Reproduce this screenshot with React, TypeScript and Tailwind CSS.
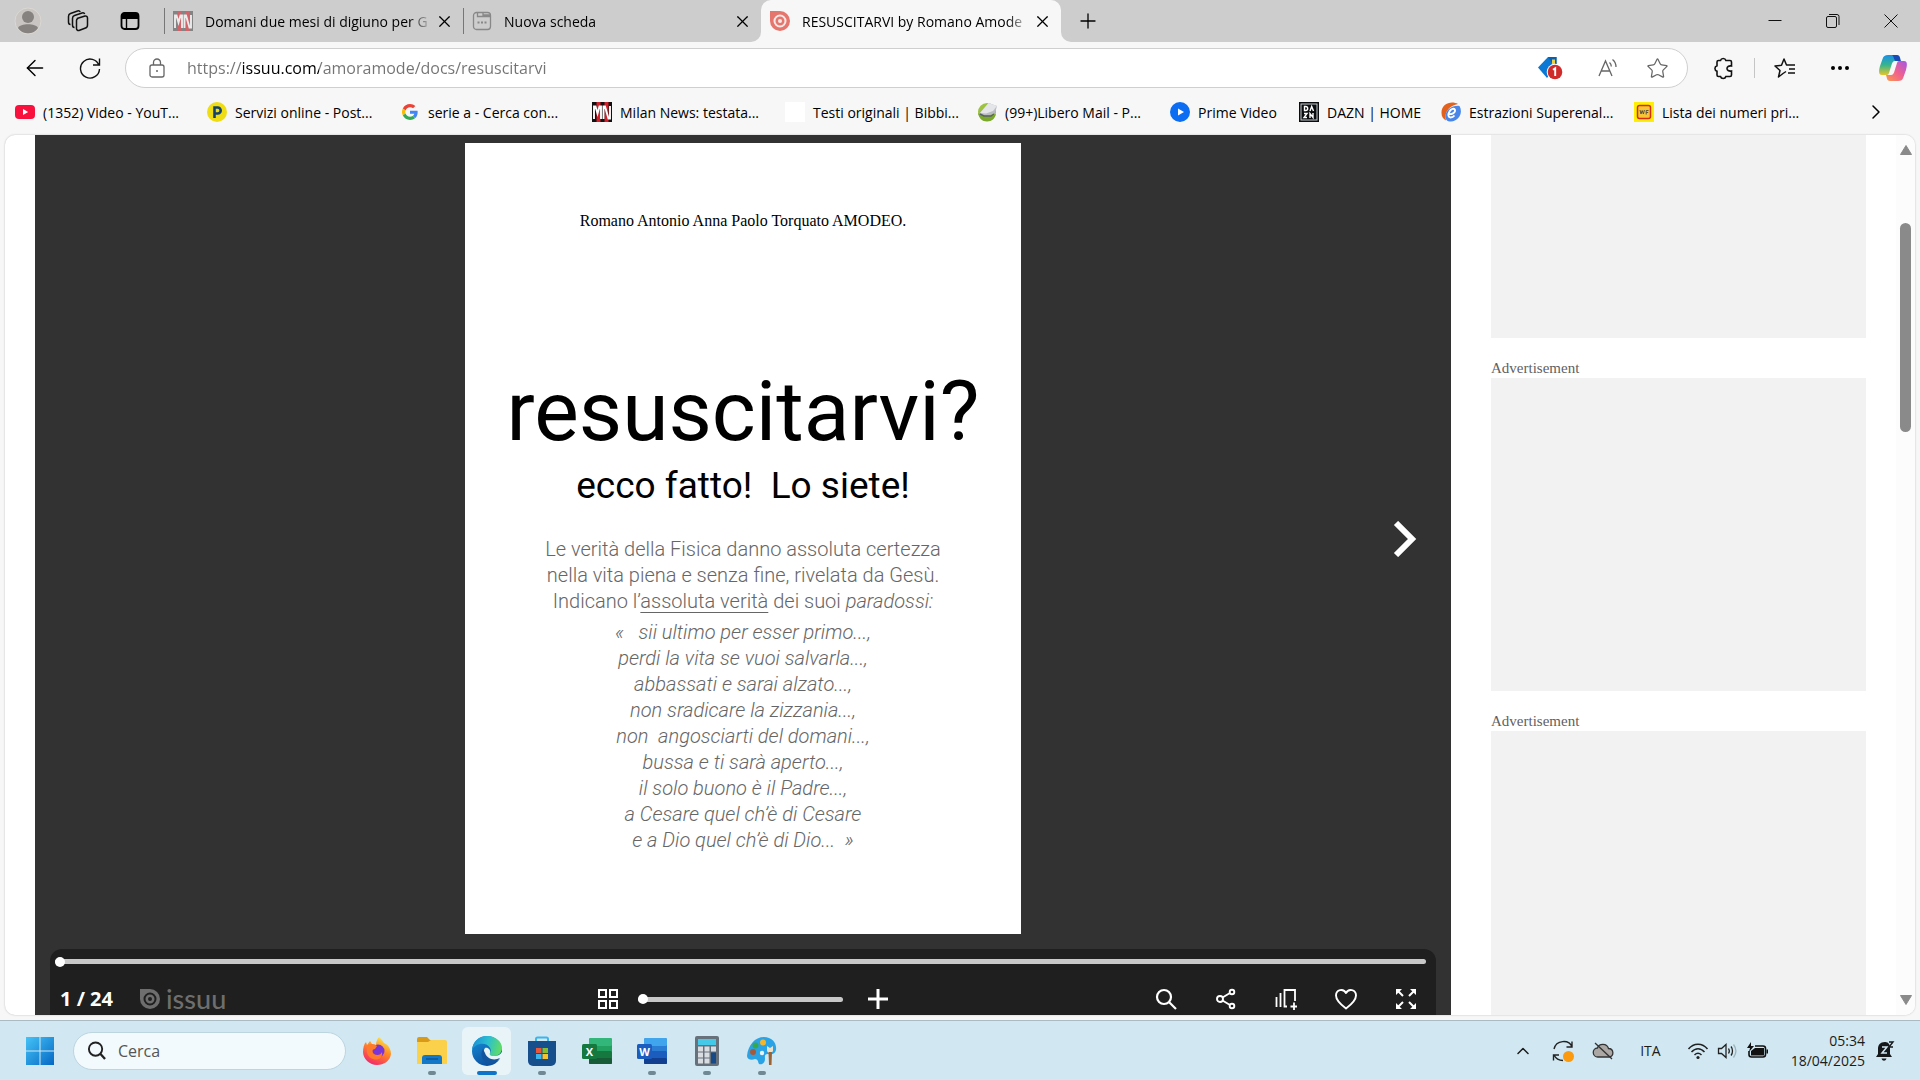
/**
 * App.tsx
 *
 * Windows desktop with a browser window open on a document reader page:
 * tab strip, toolbar, favourites bar, reader + ad column, taskbar.
 */

import { useState, type ReactNode } from "react";
import { ArrowLeft, ChevronRight, ChevronUp, Ellipsis, Plus, Star, X } from "lucide-react";

const UI_FONT = "font-['Open_Sans','Noto_Sans',sans-serif]";

/* ---------- Small logos ---------- */

function MilanNewsLogo({ faded = false }: { faded?: boolean }) {
    return (
        <svg viewBox="0 0 20 20" className={`size-5 shrink-0 ${faded ? "opacity-60" : ""}`} aria-hidden="true">
            <rect width="20" height="20" fill={faded ? "#555" : "#111"} />
            <rect x="4.500" width="4" height="20" fill="#d3202b" />
            <rect x="12.500" width="4" height="20" fill="#d3202b" />
            <path d="M2 17V4.500h1.500l2 7 2-7H9V17M11.500 17V4.500H13l3.500 12H18V4" fill="none" stroke="#fff" strokeWidth="1.900" />
        </svg>
    );
}

function IssuuMark({ className, color, hole }: { className: string; color: string; hole: string }) {
    return (
        <svg viewBox="0 0 20 20" className={className} aria-hidden="true">
            <path d="M0 0h10a10 10 0 1 1-10 10z" fill={color} />
            <circle cx="10" cy="10" r="5.500" fill="none" stroke={hole} strokeWidth="2" />
            <circle cx="10" cy="10" r="2" fill={hole} />
        </svg>
    );
}

function YouTubeLogo() {
    return (
        <svg viewBox="0 0 20 20" className="size-5 shrink-0" aria-hidden="true">
            <rect y="3" width="20" height="14" rx="4" fill="#f8113c" />
            <path d="M8 7l5.200 3L8 13z" fill="#fff" />
        </svg>
    );
}

function PosteLogo() {
    return (
        <svg viewBox="0 0 20 20" className="size-5 shrink-0" aria-hidden="true">
            <circle cx="10" cy="10" r="10" fill="#eedc14" />
            <path d="M7.500 16V5.500h3.200a3 3 0 0 1 0 6H7.500" fill="none" stroke="#12416f" strokeWidth="2.600" />
        </svg>
    );
}

function GoogleLogo() {
    return (
        <svg viewBox="0 0 48 48" className="size-5 shrink-0 p-[2px]" aria-hidden="true">
            <path fill="#EA4335" d="M24 9.500c3.540 0 6.710 1.220 9.210 3.600l6.850-6.850C35.900 2.380 30.470 0 24 0 14.620 0 6.510 5.380 2.560 13.220l7.980 6.190C12.430 13.720 17.740 9.500 24 9.500z" />
            <path fill="#4285F4" d="M46.980 24.550c0-1.570-.15-3.090-.38-4.550H24v9.020h12.940c-.58 2.960-2.260 5.480-4.780 7.180l7.730 6c4.510-4.180 7.090-10.360 7.090-17.650z" />
            <path fill="#FBBC05" d="M10.530 28.590a14.500 14.500 0 0 1 0-9.180l-7.980-6.190a24 24 0 0 0 0 21.560l7.980-6.190z" />
            <path fill="#34A853" d="M24 48c6.480 0 11.930-2.130 15.890-5.810l-7.730-6c-2.150 1.450-4.920 2.300-8.160 2.300-6.260 0-11.570-4.220-13.470-9.910l-7.980 6.190C6.510 42.620 14.620 48 24 48z" />
        </svg>
    );
}

function LiberoLogo() {
    return (
        <svg viewBox="0 0 20 20" className="size-5 shrink-0" aria-hidden="true">
            <circle cx="10" cy="10" r="9" fill="#9cc23f" />
            <path d="M1 11c1 5 4 8.500 9 8.500s8-3 9-7.500c-5 3-12 3-18-1z" fill="#7aa82b" />
            <path d="M3 11l8.500-10L20 4l-2 7-5 2H4z" fill="#b9bdc1" />
            <path d="M3 11l8.500-10L20 4l-4 5-7 2.500z" fill="#e3e5e8" />
            <path d="M3 12l4 2h7l3-2" fill="none" stroke="#59606a" strokeWidth="1.500" />
        </svg>
    );
}

function PrimeLogo() {
    return (
        <svg viewBox="0 0 20 20" className="size-5 shrink-0" aria-hidden="true">
            <circle cx="10" cy="10" r="10" fill="#0c6cf2" />
            <path d="M8 6.500l6 3.500-6 3.500z" fill="#fff" />
        </svg>
    );
}

function DaznLogo() {
    return (
        <svg viewBox="0 0 20 20" className="size-5 shrink-0" aria-hidden="true">
            <rect width="20" height="20" fill="#0b0c0e" />
            <rect x="2" y="2" width="16" height="16" fill="none" stroke="#c9cdd0" />
            <path d="M5.500 4.500v4h1.200a2 2 0 0 0 0-4zM11 9l1.700-4.500L14.500 9M5 11.500h3l-3 4h3M11 16v-4.500l3 4V11" fill="none" stroke="#fff" strokeWidth="1.400" />
        </svg>
    );
}

function EstrazioniLogo() {
    return (
        <svg viewBox="0 0 20 20" className="size-5 shrink-0" aria-hidden="true">
            <path d="M17 2C10-2 0 2 .5 11c0 4 2 6 4.500 7.500C3 10 8 4 17 2z" fill="#e2621d" />
            <path d="M18.500 4c4 7-1 15-8.500 15.500-3 .5-5-1-5.500-4C4 8 11 3 18.500 4z" fill="#4a86e8" />
            <path d="M7.500 12c3 .5 7-1 6.500-4-.5-2-4-1.500-5.500 1.500-2 3.500-1 6 1 6s3-.8 4-2" fill="none" stroke="#fff" strokeWidth="1.900" />
        </svg>
    );
}

function WfLogo() {
    return (
        <svg viewBox="0 0 20 20" className="size-5 shrink-0" aria-hidden="true">
            <rect width="20" height="20" fill="#ffee05" />
            <rect x="3.500" y="3.500" width="13" height="13" rx="2" fill="#f6c531" stroke="#d92b1c" strokeWidth="1.500" />
            <path d="M6 8l1 4 1.200-3.500L9.400 12l1-4M12.200 12.500V8.500h2.300M12.200 10.500h2" fill="none" stroke="#5b5348" strokeWidth="1" />
        </svg>
    );
}

function BlankLogo() {
    return <span className="size-5 shrink-0 bg-white" aria-hidden="true" />;
}

/* ---------- Tab strip ---------- */

function CloseTab({ name }: { name: string }) {
    return (
        <button type="button" aria-label={`Chiudi ${name}`} className="grid size-6 shrink-0 place-items-center text-black">
            <X size={19} strokeWidth={1.500} />
        </button>
    );
}

// Long titles fade out towards the close button.
function TabTitle({ children }: { children: string }) {
    return (
        <span className="ml-3 min-w-0 flex-1 whitespace-nowrap text-[14px] mask-r-from-90% mask-r-to-100%">
            {children}
        </span>
    );
}

function TabStrip() {
    return (
        <div className="flex h-[42px] bg-[#f7f7f7]">
            <div className="flex w-[761px] shrink-0 items-center rounded-br-[10px] bg-[#cdcdcd]">
                <button type="button" aria-label="Profilo" className="ml-[14px]">
                    <svg viewBox="0 0 28 28" className="size-7">
                        <circle cx="14" cy="14" r="13" fill="#c8c5c2" stroke="#dcd8d3" />
                        <circle cx="14" cy="10" r="6" fill="#85827f" />
                        <path d="M4 21c2-5 18-5 20 0-4 7-16 7-20 0z" fill="#85827f" />
                    </svg>
                </button>
                <button type="button" aria-label="Aree di lavoro" className="ml-6">
                    <svg viewBox="0 0 24 24" className="size-6" fill="none" stroke="#111" strokeWidth="1.500">
                        <path d="M11 9.500l8-2.500a2 2 0 0 1 2.500 2v7a3 3 0 0 1-2 3L13 21.500a2 2 0 0 1-2.500-2v-8a2 2 0 0 1 1.500-2z" />
                        <path d="M8.500 18.500C7 18.500 6.500 17.500 6.500 16V9.500c0-1.500.5-2.500 2-3L16 4c1.500-.4 2.300 0 2.700 1" />
                        <path d="M4.500 15.500C3 15.500 2.500 14.500 2.500 13V7.500c0-1.500.5-2.500 2-3L11.500 2c1.500-.4 2.300 0 2.700 1" />
                    </svg>
                </button>
                <button type="button" aria-label="Menu azioni schede" className="ml-[30px]">
                    <svg viewBox="0 0 20 20" className="size-5" fill="none" stroke="#000" strokeWidth="1.800">
                        <rect x="1.500" y="2" width="17" height="16" rx="3" />
                        <path d="M2 4h16v3H2z" fill="#000" />
                        <path d="M6.500 7v11" strokeWidth="1.400" />
                    </svg>
                </button>
                <div className="ml-6 h-[26px] w-px bg-[#777]" />

                <div className="flex w-[298px] items-center pr-[7px] pl-2">
                    <MilanNewsLogo faded />
                    <TabTitle>Domani due mesi di digiuno per G</TabTitle>
                    <CloseTab name="Domani due mesi di digiuno" />
                </div>
                <div className="h-[26px] w-px bg-[#777]" />
                <div className="flex flex-1 items-center pr-[7px] pl-2">
                    <svg viewBox="0 0 20 20" className="size-5 shrink-0" fill="none" stroke="#888" strokeWidth="1.300">
                        <rect x="1.500" y="1.500" width="17" height="17" rx="3" />
                        <path d="M5.500 1.500v4h13M11 1.500v2.500h7" />
                        <path d="M5.500 11.500h2M9 11.500h2M12.500 11.500h2" strokeWidth="1.800" />
                    </svg>
                    <TabTitle>Nuova scheda</TabTitle>
                    <CloseTab name="Nuova scheda" />
                </div>
            </div>

            <div className="w-[300px] shrink-0 bg-linear-to-b from-[#cdcdcd] from-50% to-[#f7f7f7] to-50%">
                <div className="flex h-full items-center rounded-t-[10px] bg-[#f7f7f7] pr-[7px] pl-[9px]">
                    <IssuuMark className="size-5 shrink-0" color="#e5766d" hole="#f7e9e7" />
                    <TabTitle>RESUSCITARVI by Romano Amode</TabTitle>
                    <CloseTab name="RESUSCITARVI" />
                </div>
            </div>

            <div className="flex flex-1 items-center justify-between rounded-bl-[10px] bg-[#cdcdcd] pl-[15px]">
                <button type="button" aria-label="Nuova scheda">
                    <Plus size={24} strokeWidth={1.300} />
                </button>
                <div className="flex">
                    <button type="button" aria-label="Riduci a icona" className="grid w-[58px] place-items-center">
                        <svg viewBox="0 0 14 14" className="size-[14px]" stroke="#111"><path d="M0.500 6.500h13" /></svg>
                    </button>
                    <button type="button" aria-label="Ripristina" className="grid w-[58px] place-items-center">
                        <svg viewBox="0 0 14 14" className="size-[14px]" fill="none" stroke="#111">
                            <rect x="0.500" y="2.500" width="10" height="11" rx="1.500" />
                            <path d="M3 .5h8a2 2 0 0 1 2 2V11" />
                        </svg>
                    </button>
                    <button type="button" aria-label="Chiudi" className="grid w-[58px] place-items-center">
                        <svg viewBox="0 0 14 14" className="size-[14px]" stroke="#111"><path d="M.5.5l13 13M13.500.5l-13 13" /></svg>
                    </button>
                </div>
            </div>
        </div>
    );
}

/* ---------- Toolbar ---------- */

function Toolbar() {
    const [url, setUrl] = useState("https://issuu.com/amoramode/docs/resuscitarvi");

    return (
        <div className="flex h-[52px] items-center bg-[#f7f7f7]">
            <button type="button" aria-label="Indietro" className="ml-[22px]">
                <ArrowLeft size={26} strokeWidth={1.300} />
            </button>
            <button type="button" aria-label="Aggiorna" className="ml-[30px]">
                <svg viewBox="0 0 24 24" className="size-6" fill="none" stroke="#111" strokeWidth="1.400">
                    <path d="M21 9.500A9.500 9.500 0 1 0 21.500 13M21.500 2.500v6.500h-6.500" />
                </svg>
            </button>

            <div className="ml-[23px] flex h-10 min-w-0 flex-1 items-center rounded-full border border-[#cfcfcf] bg-white pr-[18px] pl-[22px]">
                <svg viewBox="0 0 18 20" className="h-5 w-[18px] shrink-0" fill="none" stroke="#666" strokeWidth="1.300">
                    <rect x="2" y="7" width="14" height="12" rx="2" />
                    <path d="M5.500 7V4.500a3.500 3.500 0 0 1 7 0V7" />
                    <circle cx="9" cy="13" r="1" fill="#666" stroke="none" />
                </svg>
                <input
                    type="text"
                    aria-label="Barra degli indirizzi"
                    value={url}
                    onChange={(e) => setUrl(e.target.value)}
                    className="ml-[21px] min-w-0 flex-1 bg-[linear-gradient(90deg,#737373_56px,#000_56px,#000_132px,#737373_132px)] bg-clip-text text-[16px] text-transparent caret-black outline-none"
                />
                <button type="button" aria-label="Offerte">
                    <svg viewBox="0 0 26 26" className="size-[26px]">
                        <path d="M1 12.500L11 2h8.500v9L10 23z" fill="#0a78d4" />
                        <path d="M11 2h8.500v10l-3-2z" fill="#0d5fa8" />
                        <path d="M15 4.500h3V9h-3z" fill="#e8d24a" />
                        <circle cx="18" cy="17" r="8.300" fill="#fff" />
                        <circle cx="18" cy="17" r="7.300" fill="#cf2b2b" />
                        <path d="M16 14.800l2.200-1.500V21" fill="none" stroke="#fff" strokeWidth="1.900" />
                    </svg>
                </button>
                <button type="button" aria-label="Leggi ad alta voce" className="ml-[34px]">
                    <svg viewBox="0 0 22 22" className="size-[22px]" fill="none" stroke="#666" strokeWidth="1.300">
                        <path d="M2 19L8.500 4 15 19M4.200 14h8.600" />
                        <path d="M12.500 5.500c1.200 1 1.800 2.300 1.800 4M15.500 2.500c2.500 2 3.500 4.500 3.500 7.500" />
                    </svg>
                </button>
                <button type="button" aria-label="Aggiungi ai preferiti" className="ml-[27px] text-[#666]">
                    <Star size={23} strokeWidth={1.300} />
                </button>
            </div>

            <button type="button" aria-label="Estensioni" className="ml-6">
                <svg viewBox="0 0 24 24" className="size-6" fill="none" stroke="#111" strokeWidth="1.600">
                    <path d="M8.500 4.500a2.800 2.800 0 0 1 5.400 0H18a1.500 1.500 0 0 1 1.500 1.500v4c-3-.5-4.500 1-4.500 2.500s1.500 3 4.500 2.500v4a1.500 1.500 0 0 1-1.500 1.500h-4.100a2.800 2.800 0 0 1-5.400 0H6.500A1.500 1.500 0 0 1 5 19v-3.800a2.800 2.800 0 0 1 0-5.400V6a1.500 1.500 0 0 1 1.500-1.500z" />
                </svg>
            </button>
            <div className="ml-[18px] h-5 w-px bg-[#c5c5c5]" />
            <button type="button" aria-label="Preferiti" className="ml-[18px]">
                <svg viewBox="0 0 24 24" className="size-6" fill="none" stroke="#111" strokeWidth="1.500">
                    <path d="M13 15.500l-3 2L5.500 21l1.500-6.500L2 10l6.500-.8L11 3l2.500 6H22M16 13h6M15 17h7" strokeLinejoin="round" />
                </svg>
            </button>
            <button type="button" aria-label="Impostazioni e altro" className="ml-[31px]">
                <Ellipsis size={24} strokeWidth={2} />
            </button>
            <button type="button" aria-label="Copilot" className="mr-3 ml-[26px]">
                <svg viewBox="0 0 30 30" className="size-[30px]">
                    <defs>
                        <linearGradient id="cpA" x1="0" y1="0" x2="0" y2="1">
                            <stop offset="0" stopColor="#1a8fe8" />
                            <stop offset="0.5" stopColor="#35b58d" />
                            <stop offset="1" stopColor="#e6c52b" />
                        </linearGradient>
                        <linearGradient id="cpB" x1="1" y1="0" x2="0" y2="1">
                            <stop offset="0" stopColor="#a259e6" />
                            <stop offset="0.5" stopColor="#f0608f" />
                            <stop offset="1" stopColor="#fb9b4b" />
                        </linearGradient>
                    </defs>
                    <path d="M10 2h8c3 0 3 3 4 6h-5c-2 0-3 2-3.500 4L11 20c-.7 2-1.500 2-3 2H4c-4 0-3-5-2-9L4.500 6C5.500 3 7 2 10 2z" fill="url(#cpA)" />
                    <path d="M16 2h3c3 0 3 3 4 6h-5c-2 0-2-5-4-6z" fill="#1a49b8" />
                    <path d="M20 28h-8c-3 0-3-3-4-6h5c2 0 3-2 3.500-4L19 10c.7-2 1.500-2 3-2h4c4 0 3 5 2 9l-2.500 7c-1 3-2.500 4-5.500 4z" fill="url(#cpB)" />
                </svg>
            </button>
        </div>
    );
}

/* ---------- Favourites bar ---------- */

const FAVOURITES: { label: string; icon: ReactNode; width: string }[] = [
    { label: "(1352) Video - YouT...", icon: <YouTubeLogo />, width: "w-48" },
    { label: "Servizi online - Post...", icon: <PosteLogo />, width: "w-[193px]" },
    { label: "serie a - Cerca con...", icon: <GoogleLogo />, width: "w-48" },
    { label: "Milan News: testata...", icon: <MilanNewsLogo />, width: "w-[193px]" },
    { label: "Testi originali | Bibbi...", icon: <BlankLogo />, width: "w-48" },
    { label: "(99+)Libero Mail - P...", icon: <LiberoLogo />, width: "w-[193px]" },
    { label: "Prime Video", icon: <PrimeLogo />, width: "w-[129px]" },
    { label: "DAZN | HOME", icon: <DaznLogo />, width: "w-[142px]" },
    { label: "Estrazioni Superenal...", icon: <EstrazioniLogo />, width: "w-[193px]" },
    { label: "Lista dei numeri pri...", icon: <WfLogo />, width: "w-48" },
];

function FavouritesBar() {
    return (
        <nav aria-label="Preferiti" className="flex h-[41px] items-center bg-[#f7f7f7] pb-[5px] pl-[15px] text-[14px] text-black">
            {FAVOURITES.map((f) => (
                <a key={f.label} href="#" className={`flex shrink-0 items-center gap-2 whitespace-nowrap ${f.width}`}>
                    {f.icon}
                    {f.label}
                </a>
            ))}
            <button type="button" aria-label="Altri preferiti" className="mr-8 ml-auto">
                <ChevronRight size={24} strokeWidth={1.500} />
            </button>
        </nav>
    );
}

/* ---------- Reader ---------- */

const VERSES = [
    "«\u00a0\u00a0 sii ultimo per esser primo...,",
    "perdi la vita se vuoi salvarla...,",
    "abbassati e sarai alzato...,",
    "non sradicare la zizzania...,",
    "non\u00a0 angosciarti del domani...,",
    "bussa e ti sarà aperto...,",
    "il solo buono è il Padre...,",
    "a Cesare quel ch’è di Cesare",
    "e a Dio quel ch’è di Dio...\u00a0 »",
];

function DocumentPage() {
    return (
        <article className="h-[791px] w-[556px] shrink-0 bg-white text-center font-['Roboto','Liberation_Sans',sans-serif] text-black">
            <p className="pt-[68px] font-['Liberation_Serif','Times_New_Roman',serif] text-[16px] leading-5">
                Romano Antonio Anna Paolo Torquato AMODEO.
            </p>
            <h1 className="mt-[131px] text-[84px] leading-[100px]">resuscitarvi?</h1>
            <h2 className="mt-[2px] text-[37px] leading-[44px] whitespace-pre">ecco fatto!  Lo siete!</h2>
            <div className="mt-7 text-[20px] leading-[26px] font-light text-[#666]">
                <p>Le verità della Fisica danno assoluta certezza</p>
                <p>nella vita piena e senza fine, rivelata da Gesù.</p>
                <p>
                    Indicano l’<u className="decoration-1 underline-offset-4">assoluta verità</u> dei suoi <i>paradossi:</i>
                </p>
                <div className="mt-[5px] italic">
                    {VERSES.map((v) => (
                        <p key={v}>{v}</p>
                    ))}
                </div>
            </div>
        </article>
    );
}

const SLIDER =
    "h-[5px] appearance-none rounded-full bg-[#c8c8c8] outline-none [&::-webkit-slider-thumb]:size-[10px] [&::-webkit-slider-thumb]:appearance-none [&::-webkit-slider-thumb]:rounded-full [&::-webkit-slider-thumb]:bg-white";

function ReaderControls() {
    const [page, setPage] = useState(1);
    const [zoom, setZoom] = useState(0);

    return (
        <div className="mx-[15px] mt-[15px] h-[90px] shrink-0 rounded-t-xl bg-[#1f1f1f] pt-[10px] pr-[10px] pl-[5px] text-white">
            <input
                type="range"
                aria-label="Pagina"
                min={1}
                max={24}
                value={page}
                onChange={(e) => setPage(Number(e.target.value))}
                className={`block w-full ${SLIDER}`}
            />
            <div className="grid h-[70px] grid-cols-[1fr_auto_1fr] items-center pl-[5px]">
                <div className="flex items-center">
                    <span className="w-20 font-['Open_Sans',sans-serif] text-[20px] font-bold">{page} / 24</span>
                    <a href="#" aria-label="issuu" className="flex items-center gap-[6px] text-[#6e6e6e]">
                        <IssuuMark className="size-5" color="#6e6e6e" hole="#1f1f1f" />
                        <span className="font-['Lato',sans-serif] text-[27px] leading-7 font-medium">issuu</span>
                    </a>
                </div>
                <div className="flex items-center gap-5">
                    <button type="button" aria-label="Tutte le pagine">
                        <svg viewBox="0 0 20 20" className="size-5" fill="none" stroke="#fff" strokeWidth="2">
                            <path d="M1 1h7v7H1zM12 1h7v7h-7zM1 12h7v7H1zM12 12h7v7h-7z" />
                        </svg>
                    </button>
                    <input
                        type="range"
                        aria-label="Zoom"
                        value={zoom}
                        onChange={(e) => setZoom(Number(e.target.value))}
                        className={`w-[205px] ${SLIDER}`}
                    />
                    <button type="button" aria-label="Ingrandisci" className="ml-[5px]">
                        <svg viewBox="0 0 20 20" className="size-5" stroke="#fff" strokeWidth="3"><path d="M0 10h20M10 0v20" /></svg>
                    </button>
                </div>
                <div className="flex items-center justify-end gap-[38px] pr-[9px]">
                    <button type="button" aria-label="Cerca nel documento">
                        <svg viewBox="0 0 22 22" className="size-[22px]" fill="none" stroke="#fff" strokeWidth="2.200">
                            <circle cx="9" cy="9" r="7" />
                            <path d="M14 14l7 7" />
                        </svg>
                    </button>
                    <button type="button" aria-label="Condividi">
                        <svg viewBox="0 0 22 22" className="size-[22px]" fill="none" stroke="#fff" strokeWidth="1.900">
                            <circle cx="5" cy="11" r="3" />
                            <circle cx="17" cy="4" r="2.300" />
                            <circle cx="17" cy="18" r="2.300" />
                            <path d="M7.500 9.500L15 5M7.500 12.500L15 17" />
                        </svg>
                    </button>
                    <button type="button" aria-label="Aggiungi alla raccolta">
                        <svg viewBox="0 0 22 22" className="size-[22px]" fill="none" stroke="#fff" strokeWidth="1.800">
                            <path d="M1.500 9v10M5.500 5v14M12 18.500H9.500V2H20v11M19 14.500V22M15.500 18.500H22" />
                        </svg>
                    </button>
                    <button type="button" aria-label="Mi piace">
                        <svg viewBox="0 0 22 22" className="size-[22px]" fill="none" stroke="#fff" strokeWidth="1.900">
                            <path d="M11 20.500C7 17.500 1 12.500 1 7.500 1 1.500 8.500 0 11 5c2.500-5 10-3.500 10 2.500 0 5-6 10-10 13z" strokeLinejoin="round" />
                        </svg>
                    </button>
                    <button type="button" aria-label="Schermo intero">
                        <svg viewBox="0 0 22 22" className="size-[22px]" fill="#fff" stroke="#fff" strokeWidth="2">
                            <path d="M3 3l5 5M19 3l-5 5M3 19l5-5M19 19l-5-5" />
                            <path d="M1 1h6L1 7zM21 1h-6l6 6zM1 21h6l-6-6zM21 21h-6l6-6z" stroke="none" />
                        </svg>
                    </button>
                </div>
            </div>
        </div>
    );
}

function Reader() {
    return (
        <main className="flex min-w-0 flex-1 flex-col bg-[#323232] pt-2">
            <div className="relative flex shrink-0 justify-center">
                <DocumentPage />
                <button type="button" aria-label="Pagina successiva" className="absolute top-1/2 right-[34px] -translate-y-1/2">
                    <svg viewBox="0 0 24 36" className="h-9 w-6" fill="none" stroke="#fff" strokeWidth="6">
                        <path d="M3 2l16 16L3 34" />
                    </svg>
                </button>
            </div>
            <ReaderControls />
        </main>
    );
}

function AdColumn() {
    return (
        <aside className="mr-[30px] ml-10 w-[375px] shrink-0 font-['Liberation_Serif','Times_New_Roman',serif] text-[15px] leading-5 text-[#5f5f5f]">
            <div className="h-[203px] bg-[#f2f2f2]" />
            <p className="pt-5">Advertisement</p>
            <div className="h-[313px] bg-[#f2f2f2]" />
            <p className="pt-5">Advertisement</p>
            <div className="h-[313px] bg-[#f2f2f2]" />
        </aside>
    );
}

function ScrollRail() {
    return (
        <div className="flex w-[19px] shrink-0 flex-col items-center bg-[#fcfcfc] py-[10px]" aria-hidden="true">
            <svg viewBox="0 0 12 10" className="h-[10px] w-3" fill="#8a8a8a"><path d="M6 0.500L11.500 9.500H.5z" stroke="#8a8a8a" strokeLinejoin="round" /></svg>
            <div className="mt-[68px] h-[209px] w-[11px] rounded-full bg-[#8a8a8a]" />
            <svg viewBox="0 0 12 10" className="mt-auto h-[10px] w-3" fill="#8a8a8a"><path d="M6 9.500L.5.500h11z" stroke="#8a8a8a" strokeLinejoin="round" /></svg>
        </div>
    );
}

/* ---------- Taskbar ---------- */

function OfficeIcon({ letter, colors }: { letter: string; colors: [string, string, string, string] }) {
    return (
        <svg viewBox="0 0 30 28" className="h-7 w-[30px]" aria-hidden="true">
            <rect x="7" y="1" width="23" height="26" rx="1.500" fill={colors[1]} />
            <rect x="7" y="1" width="23" height="8" rx="1.500" fill={colors[0]} />
            <rect x="7" y="14" width="23" height="13" rx="1.500" fill={colors[2]} />
            <rect x="7" y="21" width="23" height="6" rx="1.500" fill={colors[3]} />
            <rect y="7" width="15" height="15" rx="1.500" fill={colors[2]} />
            <text x="7.500" y="18.500" textAnchor="middle" fill="#fff" fontSize="11" fontWeight="700" fontFamily="Open Sans, sans-serif">
                {letter}
            </text>
        </svg>
    );
}

const FirefoxIcon = (
    <svg viewBox="0 0 30 30" className="size-[30px]">
        <defs>
            <linearGradient id="ffA" x1="0.800" y1="0" x2="0.300" y2="1">
                <stop offset="0" stopColor="#fff14a" />
                <stop offset="0.450" stopColor="#ff8b24" />
                <stop offset="1" stopColor="#f4256d" />
            </linearGradient>
        </defs>
        <path d="M17 1c2 2 4 4 5 6l2 1c3 2 5 6 5 10-1 7-7 11-14 11S1 23 1 16c0-4 1-8 3-10l1 3 3-4 2 3 4 1c0-3 1-6 3-8z" fill="url(#ffA)" />
        <circle cx="16" cy="15" r="6.500" fill="#7a35d8" />
        <path d="M6 9c3-2 7-1 9 1l-2 3c-3 0-3 3-1 5 3 2 7 1 8-2 1 6-4 9-9 7-5-1-8-8-5-14z" fill="#ff7a2b" />
    </svg>
);

const ExplorerIcon = (
    <svg viewBox="0 0 30 30" className="size-[30px]">
        <path d="M0 3a2 2 0 0 1 2-2h8l3 3h14v8H0z" fill="#d99a17" />
        <path d="M0 6h11l3-2h14a2 2 0 0 1 2 2v22H0z" fill="#fbd04b" />
        <path d="M5 28v-6a3 3 0 0 1 3-3h14a3 3 0 0 1 3 3v6z" fill="#1378c8" />
        <path d="M9 23h12" stroke="#0b5796" strokeWidth="1.500" />
    </svg>
);

const EdgeIcon = (
    <svg viewBox="0 0 30 30" className="size-[30px]">
        <defs>
            <linearGradient id="edA" x1="0" y1="0.300" x2="1" y2="0.500">
                <stop offset="0" stopColor="#1b8fd6" />
                <stop offset="0.500" stopColor="#2bbfd0" />
                <stop offset="1" stopColor="#62dd62" />
            </linearGradient>
            <linearGradient id="edB" x1="0" y1="0" x2="0.500" y2="1">
                <stop offset="0" stopColor="#1893dc" />
                <stop offset="1" stopColor="#0c4f9e" />
            </linearGradient>
        </defs>
        <circle cx="15" cy="15" r="15" fill="url(#edB)" />
        <path d="M0 14C1 5 7 0 15 0c9 0 15 6 15 12 0 5-4 8-8 8-3 0-5-1-4-3 1-2 1-3 0-5C15 6 4 6 0 14z" fill="url(#edA)" />
        <path d="M13 12c-3 4-2 11 5 13 4 1 8 0 11-3l1 3v-9c-2 3-5 4-8 4-3 0-5-1-4-3 1-3-2-6-5-5z" fill="#e9f4f9" />
        <path d="M11 13c-4 6 0 14 8 15 4-1 7-3 9-6-6 3-13 1-15-5z" fill="#12559f" />
    </svg>
);

const StoreIcon = (
    <svg viewBox="0 0 30 30" className="size-[30px]">
        <path d="M9 6V3a1.500 1.500 0 0 1 1.500-1.500h9A1.500 1.500 0 0 1 21 3v3" fill="none" stroke="#3cb4ec" strokeWidth="2" />
        <path d="M1 5h28v20a5 5 0 0 1-5 5H6a5 5 0 0 1-5-5z" fill="#174f8c" />
        <path d="M9 12h5.500v5H9z" fill="#e8563b" />
        <path d="M15.500 12H21v5h-5.500z" fill="#86bd2e" />
        <path d="M9 18h5.500v5H9z" fill="#3cb4ec" />
        <path d="M15.500 18H21v5h-5.500z" fill="#f8c22c" />
    </svg>
);

const CalculatorIcon = (
    <svg viewBox="0 0 24 30" className="h-[30px] w-6">
        <rect width="24" height="30" rx="2" fill="#66717c" />
        <rect x="3" y="3" width="18" height="6" fill="#45c9e8" />
        <path d="M3 10.500h5v5H3zM9.500 10.500h5v5h-5zM16 10.500h5v5h-5zM3 16.500h5v5H3zM9.500 16.500h5v5h-5zM3 22.500h5v5H3zM9.500 22.500h5v5h-5z" fill="#d9dde2" />
        <path d="M16 16.500h5v11h-5z" fill="#174a86" />
    </svg>
);

const PaintIcon = (
    <svg viewBox="0 0 30 30" className="size-[30px]">
        <path d="M17 1c8 0 13 6 12 13-1 4-4 5-8 4-4 0-3 3-3 5 0 4-3 6-6 5-1-2-1-5-4-5-4 2-8 0-8-3C1 9 8 1 17 1z" fill="#2aa3e6" />
        <circle cx="6" cy="16" r="3" fill="#a65a3c" />
        <circle cx="8.500" cy="9.500" r="3" fill="#36a84a" />
        <circle cx="16" cy="6.500" r="3" fill="#f3b62d" />
        <circle cx="15" cy="17" r="2.200" fill="#e6f4fb" />
        <path d="M20 10l3 2 3-2v5l-1.500 2h-3L20 15z" fill="#ece2cb" />
        <path d="M21.500 16h3.500l-.5 13h-2.500z" fill="#9b6234" />
    </svg>
);

const APPS: { name: string; icon: ReactNode; state: "closed" | "open" | "active" }[] = [
    { name: "Firefox", icon: FirefoxIcon, state: "closed" },
    { name: "Esplora file", icon: ExplorerIcon, state: "open" },
    { name: "Microsoft Edge", icon: EdgeIcon, state: "active" },
    { name: "Microsoft Store", icon: StoreIcon, state: "open" },
    { name: "Excel", icon: <OfficeIcon letter="X" colors={["#33b679", "#21a05f", "#15783f", "#185c37"]} />, state: "closed" },
    { name: "Word", icon: <OfficeIcon letter="W" colors={["#41a5ee", "#2b7cd3", "#1a5dbe", "#133f91"]} />, state: "open" },
    { name: "Calcolatrice", icon: CalculatorIcon, state: "open" },
    { name: "Paint", icon: PaintIcon, state: "open" },
];

const INDICATOR = {
    closed: "w-2 bg-transparent",
    open: "w-2 bg-[#6f8893]",
    active: "w-5 bg-[#0e74c9]",
};

function Taskbar() {
    return (
        <footer className="flex h-[60px] shrink-0 items-center border-t border-[#a9bcc4] bg-[#d1e8f2] text-[#1b1b1b]">
            <button type="button" aria-label="Start" className="ml-[25px]">
                <svg viewBox="0 0 30 30" className="size-[30px]">
                    <defs>
                        <linearGradient id="win" x1="0" y1="0" x2="1" y2="1">
                            <stop offset="0" stopColor="#45c3f7" />
                            <stop offset="1" stopColor="#0568c4" />
                        </linearGradient>
                    </defs>
                    <path d="M1 1h13.500v13.500H1zM15.500 1H29v13.500H15.500zM1 15.500h13.500V29H1zM15.500 15.500H29V29H15.500z" fill="url(#win)" />
                </svg>
            </button>
            <label className="ml-[18px] flex h-[38px] w-[273px] items-center gap-3 rounded-full border border-[#bdd5df] bg-[#f2fafd] pl-[13px]">
                <svg viewBox="0 0 20 20" className="size-[19px] shrink-0" fill="none" stroke="#222" strokeWidth="2">
                    <circle cx="9" cy="8.500" r="7" />
                    <path d="M14 13.500l5 5.500" strokeWidth="2.400" />
                </svg>
                <input type="search" placeholder="Cerca" aria-label="Cerca" className="w-full bg-transparent text-[16px] outline-none placeholder:text-[#555]" />
            </label>

            <div className="ml-[3px] flex">
                {APPS.map((app) => (
                    <button key={app.name} type="button" aria-label={app.name} className="flex w-[55px] justify-center">
                        <span
                            className={`flex h-12 w-[49px] flex-col items-center justify-end gap-[5px] rounded-md pt-2 ${
                                app.state === "active" ? "bg-[#e9f4f9]" : ""
                            }`}
                        >
                            <span className="grid h-[30px] place-items-center">{app.icon}</span>
                            <span className={`h-1 rounded-full ${INDICATOR[app.state]}`} />
                        </span>
                    </button>
                ))}
            </div>

            <div className="ml-auto flex items-center">
                <button type="button" aria-label="Mostra icone nascoste">
                    <ChevronUp size={20} strokeWidth={1.800} />
                </button>
                <button type="button" aria-label="Aggiornamenti" className="ml-[19px]">
                    <svg viewBox="0 0 22 22" className="size-[22px]" fill="none" stroke="#222" strokeWidth="1.400">
                        <path d="M2 9C4 0 17-1 20 7M20 1.500V7h-5.500M1.500 20.500V15H7M2 15c2 4 5 5.500 9 5.500" />
                        <circle cx="16.500" cy="16.500" r="5.500" fill="#fb9a0e" stroke="none" />
                    </svg>
                </button>
                <button type="button" aria-label="OneDrive" className="ml-[18px]">
                    <svg viewBox="0 0 22 20" className="h-5 w-[22px]" fill="#aaa7a5" stroke="#333" strokeWidth="1.300">
                        <path d="M6 16a4.500 4.500 0 0 1-.5-9C7 2 15 2 16.500 7.500 22 7.500 22.500 16 17 16z" />
                        <path d="M3 2l17 16" />
                    </svg>
                </button>
                <button type="button" aria-label="Lingua" className="ml-[26px] text-[14px]">ITA</button>
                <button type="button" aria-label="Rete, volume e batteria" className="ml-[26px] flex items-center gap-2">
                    <svg viewBox="0 0 22 18" className="h-[18px] w-[22px]" fill="none" stroke="#222" strokeWidth="1.500">
                        <path d="M1.500 7c5-6.500 14-6.500 19 0M4.500 10c4-4.500 9-4.500 13 0M7.500 13c2.500-2.500 4.500-2.500 7 0" />
                        <circle cx="11" cy="15.500" r="1.600" fill="#222" stroke="none" />
                    </svg>
                    <svg viewBox="0 0 20 18" className="h-[18px] w-5" fill="none" stroke="#222" strokeWidth="1.300">
                        <path d="M1.500 6.500h3L9 2.500v13l-4.500-4h-3zM11.500 6.500c1 1.500 1 3.500 0 5M14 4.500c2 2.500 2 6.500 0 9" />
                        <path d="M16.500 2.500c3 4 3 9 0 13" stroke="#9fb3bb" />
                    </svg>
                    <svg viewBox="0 0 22 18" className="ml-[2px] h-[18px] w-[22px]">
                        <path d="M8 4h8a2.500 2.500 0 0 1 2.500 2.500v6A2.500 2.500 0 0 1 16 15H4.500A2.500 2.500 0 0 1 2 12.500V9" fill="none" stroke="#111" strokeWidth="1.600" />
                        <path d="M4 9l4-3h9v7.500H4zM19.500 7.500H21v4h-1.500zM4 0L0 6h3L2 10l5-6H4z" fill="#111" />
                    </svg>
                </button>
                <div className="ml-[22px] text-right text-[14px] leading-5">
                    <div>05:34</div>
                    <div>18/04/2025</div>
                </div>
                <button type="button" aria-label="Notifiche" className="mr-[25px] ml-[10px]">
                    <svg viewBox="0 0 20 22" className="h-[22px] w-5">
                        <path d="M10 2c-5 0-7 3-7 7v5l-2 3h16l-2-3V9M6.500 18.500h5c-1 3-4 3-5 0z" fill="#16191c" />
                        <path d="M10 2c4 0 5 3 5 7v6H9z" fill="#16191c" />
                        <path d="M7 7h5l-5 6h5" fill="none" stroke="#d1e8f2" strokeWidth="1.500" />
                        <path d="M14 2h4l-4 5h4" fill="none" stroke="#16191c" strokeWidth="1.400" />
                    </svg>
                </button>
            </div>
        </footer>
    );
}

export default function App() {
    return (
        <div className={`flex h-screen flex-col overflow-hidden bg-[#f7f7f7] ${UI_FONT}`}>
            <TabStrip />
            <Toolbar />
            <FavouritesBar />
            <div className="mx-[5px] mb-[5px] flex min-h-0 flex-1 overflow-hidden rounded-[10px] bg-white pl-[30px] shadow-[0_0_2px_rgba(0,0,0,0.25)]">
                <Reader />
                <AdColumn />
                <ScrollRail />
            </div>
            <Taskbar />
        </div>
    );
}
